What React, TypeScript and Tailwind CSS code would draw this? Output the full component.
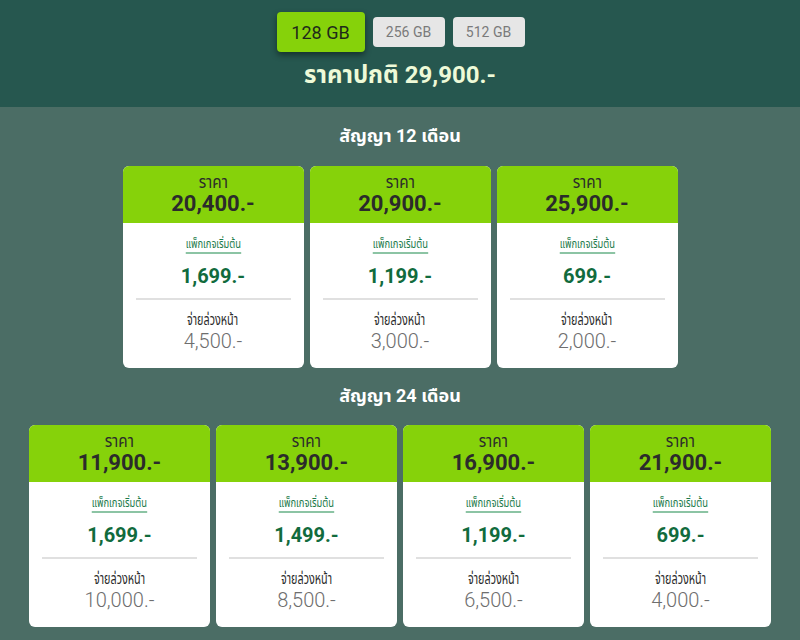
import React from "react";

const font = { fontFamily: 'Roboto, "Noto Sans Thai", "Noto Sans", "Liberation Sans", sans-serif' };

type Plan = { price: string; pkg: string; down: string };

const row12: Plan[] = [
  { price: "20,400.-", pkg: "1,699.-", down: "4,500.-" },
  { price: "20,900.-", pkg: "1,199.-", down: "3,000.-" },
  { price: "25,900.-", pkg: "699.-", down: "2,000.-" },
];
const row24: Plan[] = [
  { price: "11,900.-", pkg: "1,699.-", down: "10,000.-" },
  { price: "13,900.-", pkg: "1,499.-", down: "8,500.-" },
  { price: "16,900.-", pkg: "1,199.-", down: "6,500.-" },
  { price: "21,900.-", pkg: "699.-", down: "4,000.-" },
];

function Card({ p }: { p: Plan }) {
  return (
    <div className="w-[181px] h-[202px] rounded-[6px] overflow-hidden bg-white flex flex-col">
      <div className="h-[57px] bg-[#86d20a] flex flex-col items-center pt-[7px]">
        <div className="text-[17px] leading-[19px] text-[#2b2b2b] scale-x-[0.9]">ราคา</div>
        <div className="text-[22px] leading-[24px] font-bold text-[#2b2b2b]">{p.price}</div>
      </div>
      <div className="flex flex-col items-center pt-[13px]">
        <div className="text-[13px] leading-[15px] text-[#1b7a4a] border-b-2 border-[#8cc4a4] pb-[1px] scale-x-[0.72]">
          แพ็กเกจเริ่มต้น
        </div>
        <div className="mt-[10px] text-[20px] leading-[24px] font-bold text-[#116b3d]">{p.pkg}</div>
        <div className="mt-[10px] w-[155px] h-[2px] bg-[#e0e0e0]"></div>
        <div className="mt-[11px] text-[15px] leading-[19px] text-[#2b2b2b] scale-x-[0.72]">จ่ายล่วงหน้า</div>
        <div className="text-[20px] leading-[22px] font-light text-[#6e6e6e]">{p.down}</div>
      </div>
    </div>
  );
}

export default function App() {
  return (
    <div className="w-[800px] h-[640px] bg-[#4b6d65] flex flex-col" style={font}>
      <div className="h-[107px] bg-[#26574f] flex flex-col items-center">
        <div className="flex items-center gap-[8px] mt-[12px] ml-[1px]">
          <div className="w-[88px] h-[40px] rounded-[4px] bg-[#86d20a] flex items-center justify-center text-[18px] text-[#1f2a1a] shadow-[0_3px_6px_rgba(0,0,0,0.45)]">
            128 GB
          </div>
          <div className="w-[72px] h-[30px] rounded-[4px] bg-[#e6e6e6] flex items-center justify-center text-[14px] text-[#7a7a7a]">
            256 GB
          </div>
          <div className="w-[72px] h-[30px] rounded-[4px] bg-[#e6e6e6] flex items-center justify-center text-[14px] text-[#7a7a7a]">
            512 GB
          </div>
        </div>
        <div className="mt-[8px] text-[24px] leading-[30px] font-bold text-[#eefad8]">ราคาปกติ 29,900.-</div>
      </div>
      <div className="flex flex-col items-center">
        <div className="mt-[17px] text-[18px] leading-[24px] font-bold text-white">สัญญา 12 เดือน</div>
        <div className="mt-[18px] flex gap-[6px]">
          {row12.map((p, i) => (
            <Card key={i} p={p} />
          ))}
        </div>
        <div className="mt-[16px] text-[18px] leading-[24px] font-bold text-white">สัญญา 24 เดือน</div>
        <div className="mt-[17px] flex gap-[6px]">
          {row24.map((p, i) => (
            <Card key={i} p={p} />
          ))}
        </div>
      </div>
    </div>
  );
}
